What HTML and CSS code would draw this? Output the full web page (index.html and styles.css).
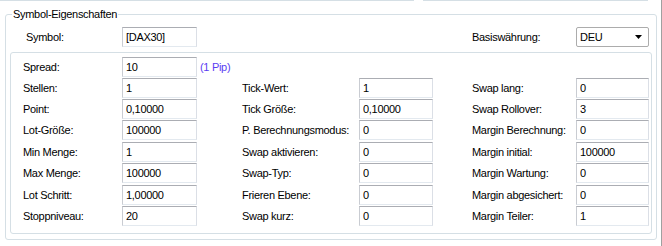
FILE: index.html
```html
<!DOCTYPE html>
<html lang="de">
<head>
  <meta charset="UTF-8" />
  <title>Symbol-Eigenschaften</title>
  <link rel="stylesheet" href="styles.css">
</head>
<body>

  <div class="window">
    <!-- bottoms of the group boxes above -->
    <div class="top-edges">
      <div class="edge edge-left"></div>
      <div class="edge edge-right"></div>
    </div>

    <fieldset class="group">
      <legend>Symbol-Eigenschaften</legend>

      <div class="symbol-row">
        <label>Symbol:</label>
        <input class="field" type="text" value="[DAX30]">
        <span></span>
        <label>Basiswährung:</label>
        <div class="combo">
          <span>DEU</span>
          <svg width="8" height="4" viewBox="0 0 8 4"><path d="M0 0h7L3.5 4z" fill="#000"/></svg>
        </div>
      </div>

      <div class="panel">
        <label>Spread:</label>
        <input class="field" type="text" value="10">
        <span class="pip">(1 Pip)</span>
        <span></span><span></span><span></span><span></span>

        <label>Stellen:</label>
        <input class="field" type="text" value="1">
        <span></span>
        <label>Tick-Wert:</label>
        <input class="field" type="text" value="1">
        <label class="right">Swap lang:</label>
        <input class="field" type="text" value="0">

        <label>Point:</label>
        <input class="field" type="text" value="0,10000">
        <span></span>
        <label>Tick Größe:</label>
        <input class="field" type="text" value="0,10000">
        <label class="right">Swap Rollover:</label>
        <input class="field" type="text" value="3">

        <label>Lot-Größe:</label>
        <input class="field" type="text" value="100000">
        <span></span>
        <label>P. Berechnungsmodus:</label>
        <input class="field" type="text" value="0">
        <label class="right">Margin Berechnung:</label>
        <input class="field" type="text" value="0">

        <label>Min Menge:</label>
        <input class="field" type="text" value="1">
        <span></span>
        <label>Swap aktivieren:</label>
        <input class="field" type="text" value="0">
        <label class="right">Margin initial:</label>
        <input class="field" type="text" value="100000">

        <label>Max Menge:</label>
        <input class="field" type="text" value="100000">
        <span></span>
        <label>Swap-Typ:</label>
        <input class="field" type="text" value="0">
        <label class="right">Margin Wartung:</label>
        <input class="field" type="text" value="0">

        <label>Lot Schritt:</label>
        <input class="field" type="text" value="1,00000">
        <span></span>
        <label>Frieren Ebene:</label>
        <input class="field" type="text" value="0">
        <label class="right">Margin abgesichert:</label>
        <input class="field" type="text" value="0">

        <label>Stoppniveau:</label>
        <input class="field" type="text" value="20">
        <span></span>
        <label>Swap kurz:</label>
        <input class="field" type="text" value="0">
        <label class="right">Margin Teiler:</label>
        <input class="field" type="text" value="1">
      </div>
    </fieldset>
  </div>

</body>
</html>
```

FILE: styles.css
```css
body { margin: 0; background: #fff; font-family: "Liberation Sans", Arial, sans-serif; font-size: 11px; letter-spacing: -0.3px; color: #000; }
.window { width: 662px; height: 246px; box-sizing: border-box; border-right: 1px solid #a0a0a0; }

.top-edges { display: flex; height: 1px; }
.edge { height: 1px; background: #d5dfe5; }
.edge-left { width: 414px; }
.edge-right { width: 225px; margin-left: 9px; }

.group { box-sizing: border-box; width: 652px; margin: 7px 0 0 5px; padding: 0 0 5px 0; border: 1px solid #d5dfe5; border-radius: 3px; min-inline-size: 0; }
.group legend { margin-left: 6px; padding: 0 1px; line-height: 13px; }

.symbol-row { display: grid; grid-template-columns: 96px 75px 275px 104px 73px; height: 20px; margin-top: 6px; padding-left: 20px; align-items: center; }

.panel { display: grid; grid-template-columns: 99px 75px 45px 117px 74px 143px 73px; grid-template-rows: 21px 21px 21px 22px 21px 22px 21px 20px; margin: 5px 4px 0 4px; padding: 4px 2px 7px 12px; border: 1px solid #d5dfe5; border-radius: 3px; align-items: start; }
.panel label { line-height: 20px; }
.panel label.right { padding-left: 39px; }

.field { box-sizing: border-box; width: 100%; height: 20px; margin: 0; padding: 0 3px; border: 1px solid; border-color: #abadb3 #dbdfe6 #e3e9ef #c9ccd2; font: inherit; letter-spacing: inherit; color: #000; background: #fff; outline: none; }
.pip { padding-left: 3px; line-height: 20px; color: #5a3cf2; }

.combo { box-sizing: border-box; height: 20px; display: flex; align-items: center; justify-content: space-between; padding: 0 5px 0 3px; border: 1px solid #acacac; border-radius: 2px; }
```
